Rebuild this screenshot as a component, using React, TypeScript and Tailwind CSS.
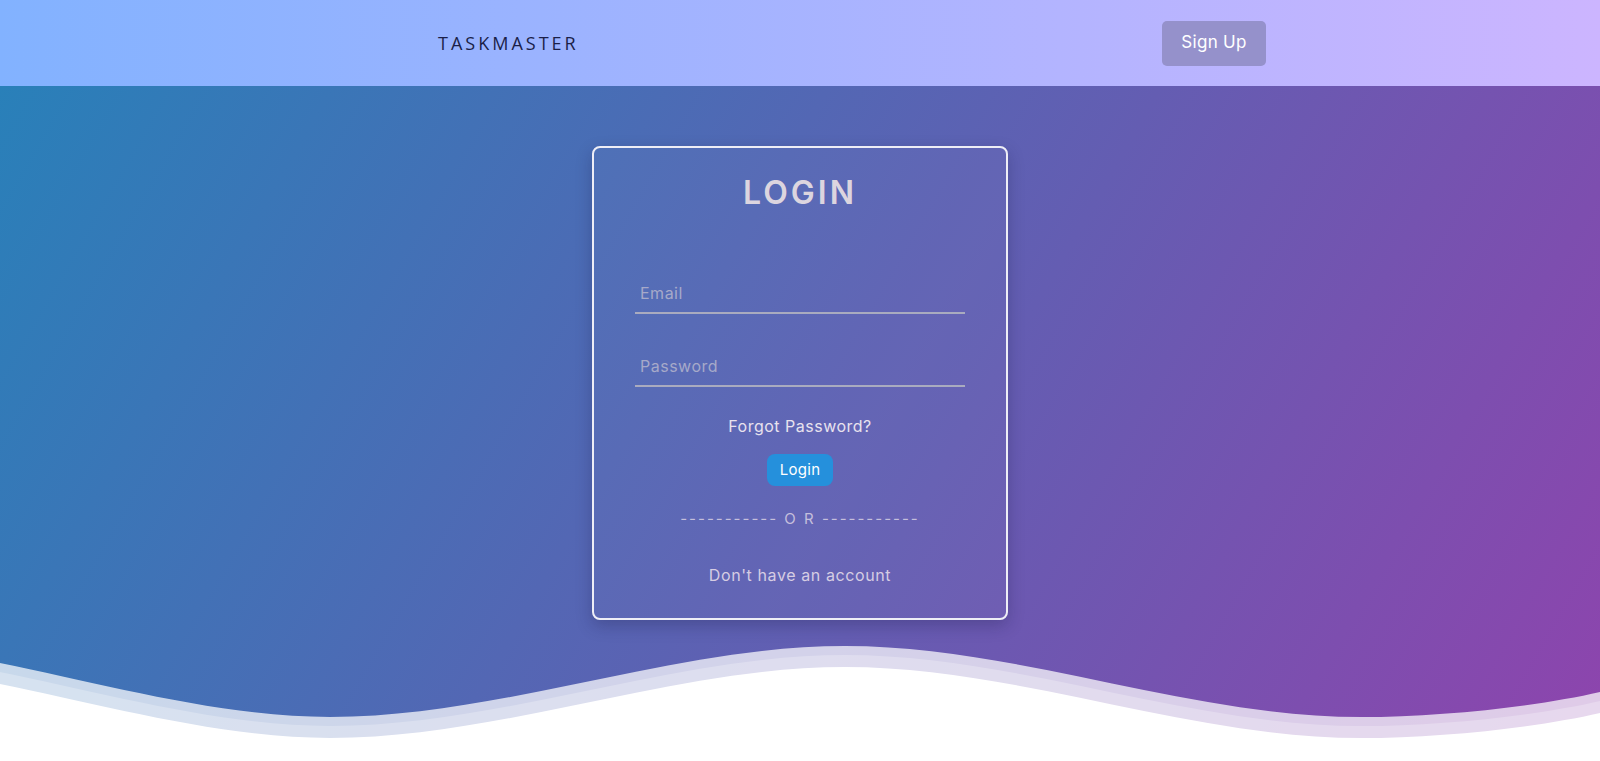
import { useState } from 'react';

const FONT = { fontFamily: 'Inter, "Open Sans", sans-serif' };

function Wave() {
  // white wave cut at the bottom of the gradient area
  const edge = 'M0,43 C100,63 220,97 330,97 C502,97 673,26 845,26 C1017,26 1189,97 1361,97 C1441,97 1540,86 1600,72';
  const band = 'M0,64 C100,84 220,118 330,118 C502,118 673,47 845,47 C1017,47 1189,118 1361,118 C1441,118 1540,107 1600,93';
  return (
    <svg className="absolute inset-x-0 bottom-0 h-[141px] w-full" viewBox="0 0 1600 141" preserveAspectRatio="none">
      <path d={`${edge} L1600,141 L0,141 Z`} fill="#ffffff" fillOpacity="0.72" />
      <path d={`M0,52 C100,72 220,106 330,106 C502,106 673,35 845,35 C1017,35 1189,106 1361,106 C1441,106 1540,95 1600,81 L1600,141 L0,141 Z`} fill="#ffffff" fillOpacity="0.25" />
      <path d={`${band} L1600,141 L0,141 Z`} fill="#ffffff" />
    </svg>
  );
}

export default function App() {
  const [email, setEmail] = useState('');
  const [password, setPassword] = useState('');

  return (
    <div className="h-[761px] w-full overflow-hidden bg-white" style={FONT}>
      <header className="flex h-[86px] items-center justify-between bg-[linear-gradient(to_right,#82b2ff,#ccb5ff)] pl-[438px] pr-[334px]">
        <div className="text-[18px] tracking-[3px] text-[#1b1f48]" style={{ fontFamily: '"Open Sans", sans-serif' }}>TASKMASTER</div>
        <button className="h-[45px] w-[104px] rounded-[5px] bg-[#9591cb] text-[17px] tracking-[0.3px] text-white">Sign Up</button>
      </header>

      <main className="relative h-[675px] bg-[linear-gradient(120deg,#2980b9,#8e44ad)]">
        <Wave />
        <div className="relative mx-auto w-[416px] pt-[60px]">
          <form onSubmit={e => e.preventDefault()}
            className="flex flex-col items-center rounded-[8px] border-2 border-[#eeeef6] bg-white/[0.03] px-[41px] pb-[31px] pt-[21px] shadow-[0_6px_16px_rgba(20,20,60,0.25)]">
            <h1 className="h-[48px] text-[32px] font-semibold leading-[48px] tracking-[3px] text-[#dcd5df]">LOGIN</h1>
            <input type="email" value={email} onChange={e => setEmail(e.target.value)} placeholder="Email"
              className="mt-[57px] h-[40px] w-[330px] border-b-2 border-[#a9abbf] bg-transparent px-[5px] text-[16px] tracking-[0.5px] text-white outline-none placeholder:text-[#a6a9c9]" />
            <input type="password" value={password} onChange={e => setPassword(e.target.value)} placeholder="Password"
              className="mt-[33px] h-[40px] w-[330px] border-b-2 border-[#a9abbf] bg-transparent px-[5px] text-[16px] tracking-[0.5px] text-white outline-none placeholder:text-[#a6a9c9]" />
            <a className="mt-[27px] text-[16px] leading-[24px] tracking-[0.5px] text-[#e8e2ee]">Forgot Password?</a>
            <button type="submit" className="mt-[16px] h-[32px] w-[66px] rounded-[8px] bg-[#2590dc] text-[15px] tracking-[0.3px] text-white">Login</button>
            <div className="mt-[22px] text-[15px] leading-[22px] tracking-[2px] text-[#c5bfdc]">----------- O R -----------</div>
            <a className="mt-[33px] text-[16px] leading-[24px] tracking-[0.6px] text-[#d6cde3]">Don't have an account</a>
          </form>
        </div>
      </main>
    </div>
  );
}
